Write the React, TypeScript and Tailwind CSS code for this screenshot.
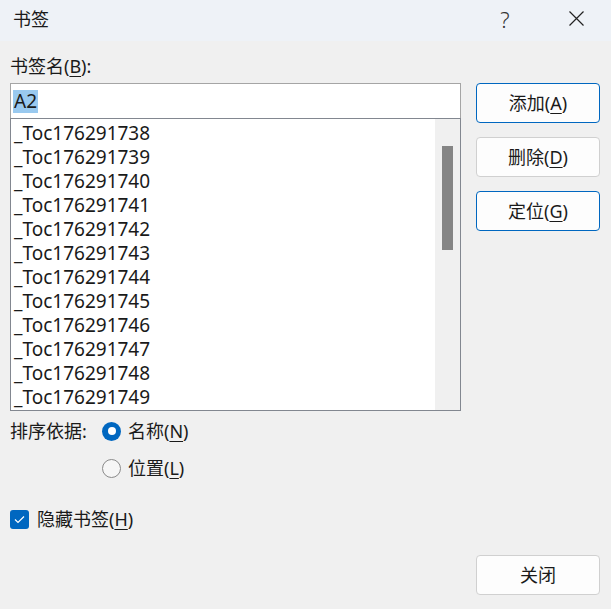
import { FC } from 'react';

const items = [
  '_Toc176291738',
  '_Toc176291739',
  '_Toc176291740',
  '_Toc176291741',
  '_Toc176291742',
  '_Toc176291743',
  '_Toc176291744',
  '_Toc176291745',
  '_Toc176291746',
  '_Toc176291747',
  '_Toc176291748',
  '_Toc176291749',
];

const Key: FC<{ k: string }> = ({ k }) => <span className="underline underline-offset-[3px]">{k}</span>;

interface IButtonProps {
  label: string;
  k: string;
  primary?: boolean;
}

const DlgButton: FC<IButtonProps> = ({ label, k, primary }) => (
  <div
    className={`flex h-[40px] w-[124px] items-center justify-center rounded-[4px] border bg-[#fdfdfd] ${
      primary ? 'border-[#0067c0]' : 'border-[#d0d0d0]'
    }`}
  >
    {label}
    {k && (
      <>
        (<Key k={k} />)
      </>
    )}
  </div>
);

const App: FC = () => {
  return (
    <div
      className="h-[609px] w-[611px] overflow-hidden bg-[#f0f0f0] text-[18px] leading-[24px] text-[#1a1a1a]"
      style={{ fontFamily: '"Noto Sans", "Noto Sans CJK SC", sans-serif' }}
    >
      {/* title bar */}
      <div className="flex h-[41px] items-center bg-[#eef2f7] pl-[13px] pr-[27px]">
        <div className="flex-1 pb-[3px]">书签</div>
        <div className="w-[20px] pb-[4px] text-center text-[22px] font-light text-[#333]">?</div>
        <div className="ml-[54px] flex items-center pb-[4px]">
          <svg width="15" height="15" viewBox="0 0 15 15">
            <path d="M0.5 0.5 L14.5 14.5 M14.5 0.5 L0.5 14.5" stroke="#222" strokeWidth="1.2" fill="none" />
          </svg>
        </div>
      </div>

      <div className="flex gap-[15px] pl-[10px] pt-[13px]">
        {/* left column */}
        <div className="flex w-[451px] flex-col">
          <div className="mb-[5px]">
            书签名(<Key k="B" />):
          </div>
          <div className="flex h-[35px] items-center border border-b-0 border-[#a5a5a5] bg-white pl-[2px]">
            <span className="bg-[#99c9ef] px-[1px] text-[19px] leading-[23px]">A2</span>
          </div>
          <div className="flex h-[293px] border border-[#828790] bg-white">
            <div className="flex-1 pl-[3px] pt-[2px] text-[19px]">
              {items.map((it) => (
                <div key={it} className="h-[24px] leading-[24px]">
                  {it}
                </div>
              ))}
            </div>
            <div className="w-[25px] bg-[#f0f0f0] pt-[27px]">
              <div className="ml-[7px] h-[104px] w-[11px] bg-[#858585]" />
            </div>
          </div>

          {/* sort by */}
          <div className="mt-[8px] flex">
            <div className="w-[92px]">排序依据:</div>
            <div className="flex flex-col gap-[13px]">
              <div className="flex items-center gap-[7px]">
                <div className="flex h-[19px] w-[19px] items-center justify-center rounded-full bg-[#0067c0]">
                  <div className="h-[8px] w-[8px] rounded-full bg-white" />
                </div>
                <span>
                  名称(<Key k="N" />)
                </span>
              </div>
              <div className="flex items-center gap-[7px]">
                <div className="h-[19px] w-[19px] rounded-full border border-[#8a8a8a] bg-[#f6f6f6]" />
                <span>
                  位置(<Key k="L" />)
                </span>
              </div>
            </div>
          </div>

          {/* hide bookmarks */}
          <div className="mt-[27px] flex items-center gap-[8px]">
            <div className="flex h-[19px] w-[19px] items-center justify-center rounded-[3px] bg-[#0067c0]">
              <svg width="11" height="9" viewBox="0 0 11 9">
                <path d="M1 4.5 L4 7.5 L10 1.5" stroke="white" strokeWidth="1.2" fill="none" />
              </svg>
            </div>
            <span>
              隐藏书签(<Key k="H" />)
            </span>
          </div>
        </div>

        {/* right column */}
        <div className="flex flex-col pt-[29px]">
          <div className="flex flex-col gap-[14px]">
            <DlgButton label="添加" k="A" primary />
            <DlgButton label="删除" k="D" />
            <DlgButton label="定位" k="G" primary />
          </div>
          <div className="mt-[324px]">
            <DlgButton label="关闭" k="" />
          </div>
        </div>
      </div>
    </div>
  );
};

export default App;
